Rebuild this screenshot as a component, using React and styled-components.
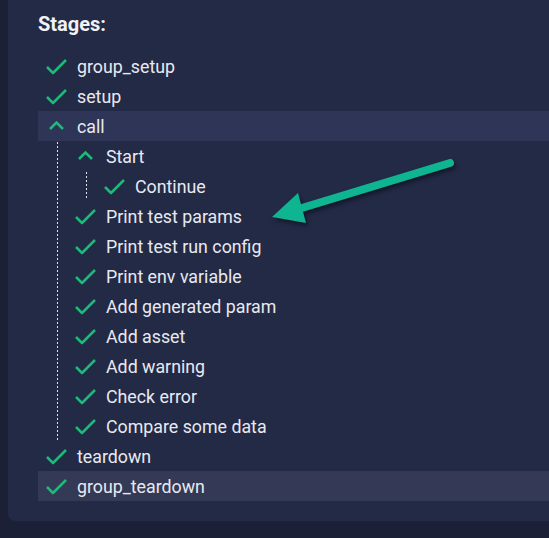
import React from "react";
import styled, { createGlobalStyle, css } from "styled-components";

const GlobalStyle = createGlobalStyle`
  html, body {
    margin: 0;
    padding: 0;
    background: #1b2036;
    overflow: hidden;
  }
  body {
    font-family: Roboto, "Noto Sans", "Liberation Sans", sans-serif;
    -webkit-font-smoothing: antialiased;
  }
`;

const Page = styled.div`
  width: 549px;
  height: 538px;
  padding-left: 8px;
  box-sizing: border-box;
`;

const Panel = styled.section`
  position: relative;
  background: #232a46;
  border-radius: 0 0 0 8px;
  padding: 12px 0 20px 30px;
`;

const Title = styled.h3`
  margin: 0 0 15px 0;
  font-size: 20px;
  line-height: 24px;
  font-weight: 700;
  color: #f1f2f6;
`;

const List = styled.div`
  display: flex;
  flex-direction: column;
`;

const Row = styled.div`
  display: flex;
  align-items: center;
  gap: 10px;
  height: 30px;
  padding-left: ${(p) => 8 + p.$depth * 29}px;
  color: #e8e9f0;
  font-size: 17.8px;
  white-space: nowrap;
  ${(p) =>
    p.$tone === "active" &&
    css`
      background: #2e3557;
    `}
  ${(p) =>
    p.$tone === "hover" &&
    css`
      background: #343a56;
    `}
`;

const Label = styled.span`
  line-height: 28px;
  padding-top: 2px;
`;

const IconBox = styled.span`
  display: flex;
  align-items: center;
  justify-content: flex-start;
  width: 21px;
  height: 18px;
  flex: none;
`;

const Children = styled.div`
  position: relative;
  display: flex;
  flex-direction: column;
  &::before {
    content: "";
    position: absolute;
    top: 1px;
    bottom: 1px;
    left: ${(p) => 19 + p.$depth * 29}px;
    width: 1px;
    background: repeating-linear-gradient(
      to bottom,
      #e3e5ee 0,
      #e3e5ee 2px,
      transparent 2px,
      transparent 4px
    );
  }
`;

const ArrowLayer = styled.svg`
  position: absolute;
  left: 257px;
  top: 150px;
  width: 200px;
  height: 80px;
  overflow: visible;
  pointer-events: none;
  filter: drop-shadow(2px 3px 2px rgba(5, 8, 20, 0.55));
`;

const GREEN = "#1dba7a";

const CheckIcon = () => (
  <svg width="21" height="18" viewBox="0 0 21 18">
    <polyline
      points="1,10 7,16 20,3"
      fill="none"
      stroke={GREEN}
      strokeWidth="2.5"
      strokeLinejoin="round"
    />
  </svg>
);

const ChevronUp = () => (
  <svg width="21" height="18" viewBox="0 0 21 18">
    <polyline
      points="4,12 10.5,5.5 17,12"
      fill="none"
      stroke={GREEN}
      strokeWidth="2.5"
      strokeLinejoin="miter"
    />
  </svg>
);

const stages = [
  { name: "group_setup" },
  { name: "setup" },
  {
    name: "call",
    tone: "active",
    children: [
      { name: "Start", children: [{ name: "Continue" }] },
      { name: "Print test params" },
      { name: "Print test run config" },
      { name: "Print env variable" },
      { name: "Add generated param" },
      { name: "Add asset" },
      { name: "Add warning" },
      { name: "Check error" },
      { name: "Compare some data" },
    ],
  },
  { name: "teardown" },
  { name: "group_teardown", tone: "hover" },
];

const Node = ({ node, depth }) => {
  const expanded = Array.isArray(node.children);
  return (
    <>
      <Row $depth={depth} $tone={node.tone}>
        <IconBox>{expanded ? <ChevronUp /> : <CheckIcon />}</IconBox>
        <Label>{node.name}</Label>
      </Row>
      {expanded && (
        <Children $depth={depth}>
          {node.children.map((c) => (
            <Node key={c.name} node={c} depth={depth + 1} />
          ))}
        </Children>
      )}
    </>
  );
};

export default function App() {
  return (
    <Page>
      <GlobalStyle />
      <Panel>
        <Title>Stages:</Title>
        <List>
          {stages.map((s) => (
            <Node key={s.name} node={s} depth={0} />
          ))}
        </List>
        <ArrowLayer viewBox="265 150 200 80">
          <line
            x1="450"
            y1="163"
            x2="292"
            y2="211"
            stroke="#0fb491"
            strokeWidth="8"
            strokeLinecap="round"
          />
          <polygon points="272,217 298,193 306,223" fill="#0fb491" />
        </ArrowLayer>
      </Panel>
    </Page>
  );
}
